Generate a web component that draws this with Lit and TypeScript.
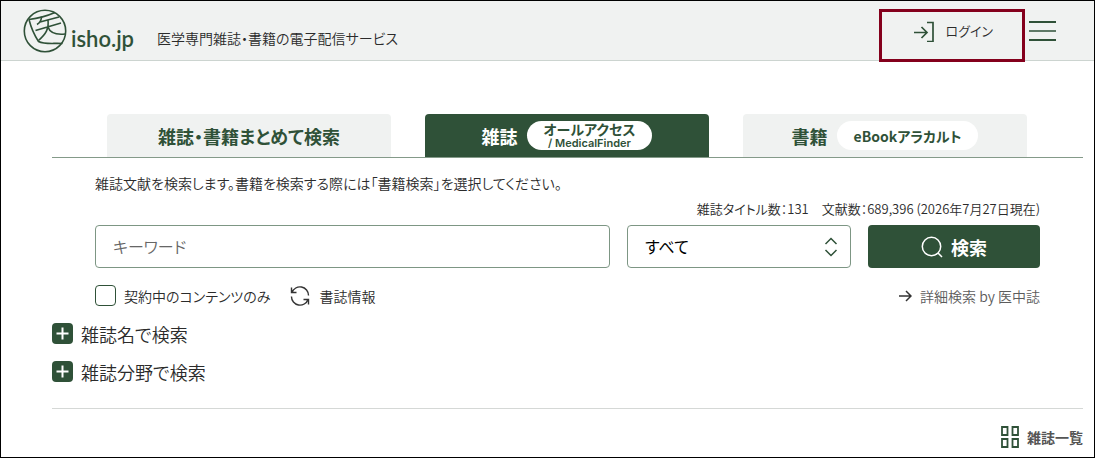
import { LitElement, html, css } from "lit";
import { customElement } from "lit/decorators.js";

@customElement("app-root")
export class AppRoot extends LitElement {
  static styles = css`
    :host {
      display: block;
      box-sizing: border-box;
      min-height: 100vh;
      border: 1px solid #000;
      background: #fff;
      color: #2b2b2b;
      font-family: "Noto Sans CJK JP", sans-serif;
      font-size: 14px;
      font-weight: 350;
      line-height: 20px;
      font-feature-settings: "palt";
      --green: #2f5138;
      --pale: #f0f2f1;
    }
    * { box-sizing: border-box; }
    svg { display: block; flex: none; fill: none; }
    a { color: inherit; text-decoration: none; }
    button, input, select {
      font: inherit;
      font-feature-settings: inherit;
      margin: 0;
      padding: 0;
      border: 0;
      background: none;
      color: inherit;
    }
    .header {
      display: flex;
      align-items: center;
      height: 60px;
      padding: 0 38px 0 22px;
      background: var(--pale);
      border-bottom: 1px solid #ccd4d0;
    }
    .logo { display: flex; align-items: center; gap: 4px; color: var(--green); }
    .wordmark {
      padding-top: 16px;
      font: 600 22px/28px Lato, sans-serif;
    }
    .tagline { margin: 14px 0 0 23px; }
    .login-box { position: relative; margin-left: auto; }
    .login {
      display: flex;
      align-items: center;
      gap: 12px;
      padding-right: 36px;
      font-size: 13px;
    }
    .login-frame {
      position: absolute;
      inset: -11px 4px -20px -35px;
      border: 3px solid #84001c;
      pointer-events: none;
    }
    .main { padding: 53px 11px 0 51px; }
    .tabs {
      display: grid;
      grid-template-columns: repeat(3, 1fr);
      gap: 34px;
      padding: 0 56px 0 55px;
      border-bottom: 1px solid #849a89;
    }
    .tab {
      display: flex;
      align-items: center;
      justify-content: center;
      gap: 9px;
      height: 43px;
      border-radius: 4px 4px 0 0;
      background: var(--pale);
      color: var(--green);
      font-size: 18px;
      font-weight: 700;
      white-space: nowrap;
    }
    .tab.active { background: var(--green); color: #fff; }
    .pill {
      display: flex;
      flex-direction: column;
      align-items: center;
      justify-content: center;
      height: 29px;
      padding: 0 17px;
      border-radius: 15px;
      background: #fff;
      color: var(--green);
      font-size: 14px;
      line-height: 16px;
    }
    .pill small { font: 600 11px/13px Inter, sans-serif; }
    .panel { padding: 15px 43px 0; }
    .panel p { margin: 0; }
    .panel .count { margin-top: 6px; text-align: right; font-size: 13px; }
    .search {
      display: grid;
      grid-template-columns: 1fr 224px 172px;
      gap: 17px;
      margin-top: 6px;
      font-size: 16px;
    }
    .field {
      width: 100%;
      height: 43px;
      padding: 0 17px 2px;
      border: 1px solid #7d9684;
      border-radius: 4px;
      background: #fff;
      color: #000;
    }
    .field::placeholder { color: #666; opacity: 1; }
    .select { display: grid; align-items: center; font-weight: 400; }
    .select > * { grid-area: 1 / 1; }
    .select select { appearance: none; }
    .select svg { justify-self: end; margin-right: 13px; pointer-events: none; }
    .submit {
      display: flex;
      align-items: center;
      justify-content: center;
      gap: 8px;
      border-radius: 4px;
      background: var(--green);
      color: #fff;
      font-size: 18px;
      font-weight: 700;
    }
    .options { display: flex; align-items: center; margin-top: 17px; }
    .check { display: flex; align-items: center; gap: 8px; }
    .check input {
      appearance: none;
      width: 21px;
      height: 21px;
      border: 1px solid var(--green);
      border-radius: 4px;
    }
    .check input:checked { background: var(--green); }
    .reset { display: flex; align-items: center; gap: 9px; margin-left: 20px; }
    .detail { display: flex; align-items: center; gap: 8px; margin-left: auto; color: #5c5c5c; }
    .accordions { display: grid; justify-items: start; gap: 17px; margin-top: 17px; }
    .accordion { display: flex; align-items: center; gap: 8px; height: 21px; font-size: 18px; }
    .list-bar {
      display: flex;
      justify-content: flex-end;
      margin-top: 26px;
      padding-top: 17px;
      border-top: 1px solid #d5d8d6;
    }
    .list-link { display: flex; align-items: center; gap: 8px; color: #555; font-weight: 700; }
  `;

  private plus() {
    return html`<svg width="21" height="21" viewBox="0 0 21 21" aria-hidden="true">
      <rect width="21" height="21" rx="4" fill="#2f5138" />
      <path d="M4.5 10.5h12M10.5 4.5v12" stroke="#fff" stroke-width="2" />
    </svg>`;
  }

  render() {
    return html`
      <header class="header">
        <a class="logo" href="#" aria-label="isho.jp">
          <svg width="44" height="44" viewBox="0 0 44 44" stroke="#2f5138" stroke-width="1.6" aria-hidden="true">
            <circle cx="22" cy="22" r="20.7" />
            <path d="M6 10.5C14 9.500 24 7 32 3.500M6 10.500c2 8 5 15 9.500 22c6 3 14 1.500 24 2" />
            <path d="M18.500 7.500c0 4-1 6-4.500 8M17 13L36 8M12.500 21.500L38 14M25 11c1 9-2 14-9.500 20.500M25 18c2 6 7 8 17 7" />
          </svg>
          <span class="wordmark">isho.jp</span>
        </a>
        <span class="tagline">医学専門雑誌・書籍の電子配信サービス</span>
        <div class="login-box">
          <a class="login" href="#">
            <svg width="20" height="22" viewBox="0 0 20 22" stroke="#2f5138" stroke-width="1.700" aria-hidden="true">
              <path d="M0 12.500h13M7.500 7l5.500 5.500L7.500 18M13 2.500h6v19h-6" />
            </svg>
            ログイン
          </a>
          <span class="login-frame"></span>
        </div>
        <button class="menu" type="button" aria-label="メニュー">
          <svg width="27" height="20" viewBox="0 0 27 20" stroke="#2f5138" aria-hidden="true">
            <path d="M0 1h27M0 19h27" stroke-width="2" />
            <path d="M0 10h27" stroke-width="1.500" />
          </svg>
        </button>
      </header>

      <main class="main">
        <nav class="tabs">
          <a class="tab" href="#">雑誌・書籍まとめて検索</a>
          <a class="tab active" href="#" aria-current="page">雑誌
            <span class="pill"><span>オールアクセス</span><small>/ MedicalFinder</small></span>
          </a>
          <a class="tab" href="#">書籍<span class="pill">eBookアラカルト</span></a>
        </nav>

        <div class="panel">
          <p>雑誌文献を検索します。書籍を検索する際には「書籍検索」を選択してください。</p>
          <p class="count">雑誌タイトル数：131　文献数：689,396 (2026年7月27日現在)</p>
          <form class="search" @submit=${(e: Event) => e.preventDefault()}>
            <input class="field" type="text" placeholder="キーワード" aria-label="キーワード" />
            <label class="select">
              <select class="field" aria-label="検索対象">
                <option>すべて</option>
              </select>
              <svg width="14" height="20" viewBox="0 0 14 20" stroke="#2f5138" stroke-width="1.500" aria-hidden="true">
                <path d="M1.500 7L7 1.500 12.500 7M1.500 13L7 18.500l5.500-5.500" />
              </svg>
            </label>
            <button class="submit" type="submit">
              <svg width="22" height="22" viewBox="0 0 22 22" stroke="#fff" stroke-width="1.500" aria-hidden="true">
                <circle cx="10.500" cy="10.500" r="9.200" />
                <path d="M17 17l4 4" />
              </svg>
              検索
            </button>
          </form>
          <div class="options">
            <label class="check"><input type="checkbox" />契約中のコンテンツのみ</label>
            <button class="reset" type="button">
              <svg width="20" height="20" viewBox="0 0 20 20" stroke="#333" stroke-width="1.400" aria-hidden="true">
                <path d="M2 6.500A8.500 8.500 0 0 1 18.500 9.500M1.500 1.500v5h5M18 13.500A8.500 8.500 0 0 1 1.500 10.500M18.500 18.500v-5h-5" />
              </svg>
              書誌情報
            </button>
            <a class="detail" href="#">
              <svg width="13" height="12" viewBox="0 0 13 12" stroke="#333" stroke-width="1.500" aria-hidden="true">
                <path d="M0 6h12M7 1l5 5-5 5" />
              </svg>
              詳細検索 by 医中誌
            </a>
          </div>
        </div>

        <div class="accordions">
          <button class="accordion" type="button">${this.plus()}雑誌名で検索</button>
          <button class="accordion" type="button">${this.plus()}雑誌分野で検索</button>
        </div>

        <div class="list-bar">
          <a class="list-link" href="#">
            <svg width="18" height="22" viewBox="0 0 18 22" stroke="#2f5138" stroke-width="1.800" aria-hidden="true">
              <path d="M1 1h5.500v8H1zM11.500 1H17v8h-5.500zM1 13h5.500v8H1zM11.500 13H17v8h-5.500z" />
            </svg>
            雑誌一覧
          </a>
        </div>
      </main>
    `;
  }
}
